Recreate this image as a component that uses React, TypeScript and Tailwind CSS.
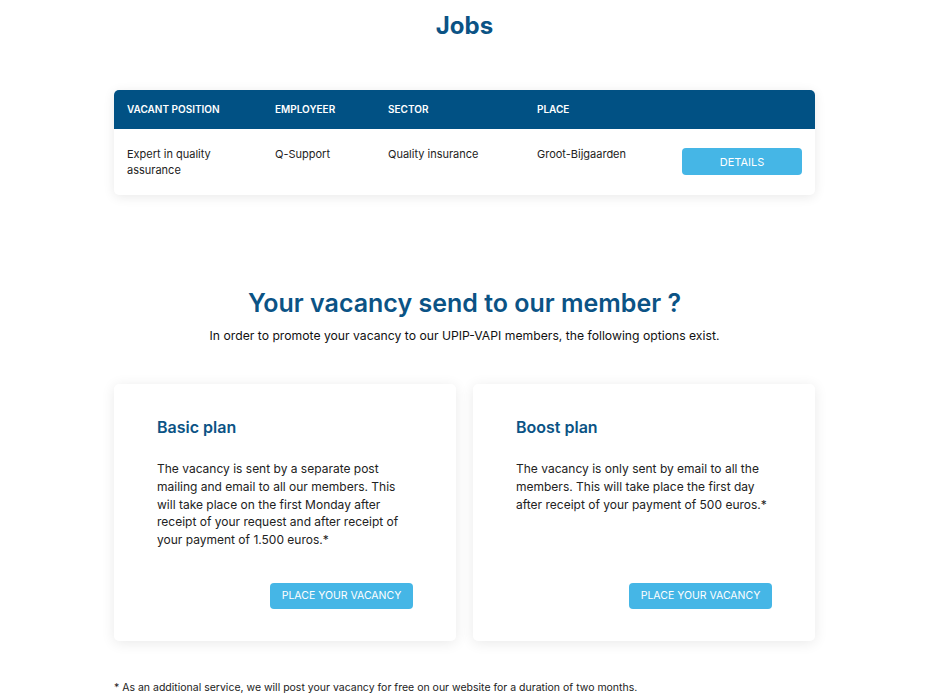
const jobs = [
  { position: 'Expert in quality assurance', employer: 'Q-Support', sector: 'Quality insurance', place: 'Groot-Bijgaarden' },
]

const plans = [
  {
    title: 'Basic plan',
    text: 'The vacancy is sent by a separate post mailing and email to all our members. This will take place on the first Monday after receipt of your request and after receipt of your payment of 1.500 euros.*',
  },
  {
    title: 'Boost plan',
    text: 'The vacancy is only sent by email to all the members. This will take place the first day after receipt of your payment of 500 euros.*',
  },
]

export default function App() {
  return (
    <div className="min-h-[700px] bg-white text-[#222] font-['Inter',sans-serif]">
      <div className="ml-[114px] w-[701px]">
        <h1 className="pt-[11px] text-center text-[24px] leading-[30px] font-bold text-[#0b5385]">Jobs</h1>

        {/* tableau des offres */}
        <div className="mt-[49px] overflow-hidden rounded-[5px] bg-white shadow-[0_2px_12px_rgba(0,0,0,0.09)]">
          <div className="grid grid-cols-[148px_113px_149px_1fr] bg-[#015184] px-[13px] h-[39px] items-center text-[10px] font-semibold uppercase text-white">
            <div>Vacant position</div>
            <div>Employeer</div>
            <div>Sector</div>
            <div>Place</div>
          </div>
          {jobs.map((j) => (
            <div key={j.position} className="grid grid-cols-[148px_113px_149px_1fr] px-[13px] pt-[17px] pb-[17px] text-[11px] leading-[16px] text-[#222]">
              <div className="pr-[30px]">{j.position}</div>
              <div>{j.employer}</div>
              <div>{j.sector}</div>
              <div className="flex justify-between items-start">
                <span>{j.place}</span>
                <button className="mt-[2px] h-[27px] w-[120px] rounded-[4px] bg-[#45b6e6] text-[11px] uppercase text-white">Details</button>
              </div>
            </div>
          ))}
        </div>

        <h2 className="mt-[92px] text-center text-[25px] leading-[32px] font-semibold text-[#0b5385]">Your vacancy send to our member ?</h2>
        <p className="mt-[8px] text-center text-[12.2px] leading-[18px] text-[#111]">
          In order to promote your vacancy to our UPIP-VAPI members, the following options exist.
        </p>

        <div className="mt-[39px] grid grid-cols-2 gap-[17px]">
          {plans.map((p) => (
            <div key={p.title} className="flex h-[257px] flex-col rounded-[5px] bg-white px-[43px] pt-[32px] pb-[32px] shadow-[0_2px_14px_rgba(0,0,0,0.09)]">
              <h3 className="text-[16px] leading-[22px] font-semibold text-[#0b5385]">{p.title}</h3>
              <p className="mt-[22px] text-[12px] leading-[17.8px] text-[#222]">{p.text}</p>
              <div className="mt-auto flex justify-end">
                <button className="h-[26px] w-[143px] rounded-[4px] bg-[#45b6e6] text-[10.5px] uppercase text-white">Place your vacancy</button>
              </div>
            </div>
          ))}
        </div>

        <p className="mt-[40px] text-[10.5px] leading-[14px] text-[#222]">
          * As an additional service, we will post your vacancy for free on our website for a duration of two months.
        </p>
      </div>
    </div>
  )
}
